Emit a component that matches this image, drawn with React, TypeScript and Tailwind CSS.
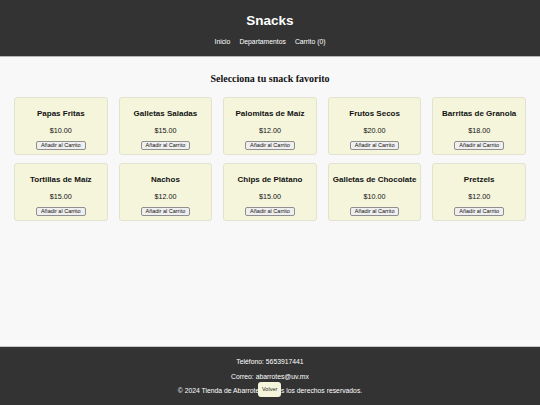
const snacks = [
  { name: 'Papas Fritas', price: 10 },
  { name: 'Galletas Saladas', price: 15 },
  { name: 'Palomitas de Maíz', price: 12 },
  { name: 'Frutos Secos', price: 20 },
  { name: 'Barritas de Granola', price: 18 },
  { name: 'Tortillas de Maíz', price: 15 },
  { name: 'Nachos', price: 12 },
  { name: 'Chips de Plátano', price: 15 },
  { name: 'Galletas de Chocolate', price: 10 },
  { name: 'Pretzels', price: 12 },
]

export default function App() {
  return (
    <div className="relative flex min-h-[405px] flex-col bg-[#f8f8f8] font-['Liberation_Sans',Arial,sans-serif] text-[#111]">
      {/* Header */}
      <header className="h-[57px] border-b border-[#b5b5b5] bg-[#333333] pt-[12px] text-center text-white">
        <h1 className="text-[13.5px] font-bold leading-[17px]">Snacks</h1>
        <nav className="mt-[8px] flex justify-center gap-[9px] text-[6.8px] leading-[10px] text-white">
          <a className="text-white">Inicio</a>
          <a className="text-white">Departamentos</a>
          <a className="text-white">Carrito (0)</a>
        </nav>
      </header>

      {/* Main */}
      <main className="flex-1 px-[14px] pt-[16px]">
        <h2 className="text-center font-['Liberation_Serif','Times_New_Roman',serif] text-[10px] font-bold leading-[12px]">
          Selecciona tu snack favorito
        </h2>
        <div className="mt-[12px] grid grid-cols-5 gap-x-[11px] gap-y-[8px]">
          {snacks.map((s) => (
            <div
              key={s.name}
              className="flex h-[58px] flex-col items-center rounded-[3px] border border-[#e2e2d0] bg-[#f5f5dc] pt-[11px]"
            >
              <h3 className="text-[8px] font-bold leading-[10px] whitespace-nowrap">{s.name}</h3>
              <p className="mt-[7px] text-[7.2px] leading-[9px]">${s.price.toFixed(2)}</p>
              <button className="mt-[6px] h-[9px] rounded-[2px] border border-[#8f8f8f] bg-[#efefef] px-[4px] text-[5.5px] leading-[7px]">
                Añadir al Carrito
              </button>
            </div>
          ))}
        </div>
      </main>

      {/* Footer */}
      <footer className="h-[59px] border-t border-[#c8c8c8] bg-[#333333] pt-[8px] text-center text-[6.8px] leading-[14.5px] text-white">
        <p>Teléfono: 5653917441</p>
        <p>Correo: abarrotes@uv.mx</p>
        <p>© 2024 Tienda de Abarrotes. Todos los derechos reservados.</p>
      </footer>

      <button className="absolute bottom-[8px] left-[258px] h-[15px] rounded-[3px] bg-[#f5f5dc] px-[4px] text-[5.5px] text-[#222]">
        Volver
      </button>
    </div>
  )
}
